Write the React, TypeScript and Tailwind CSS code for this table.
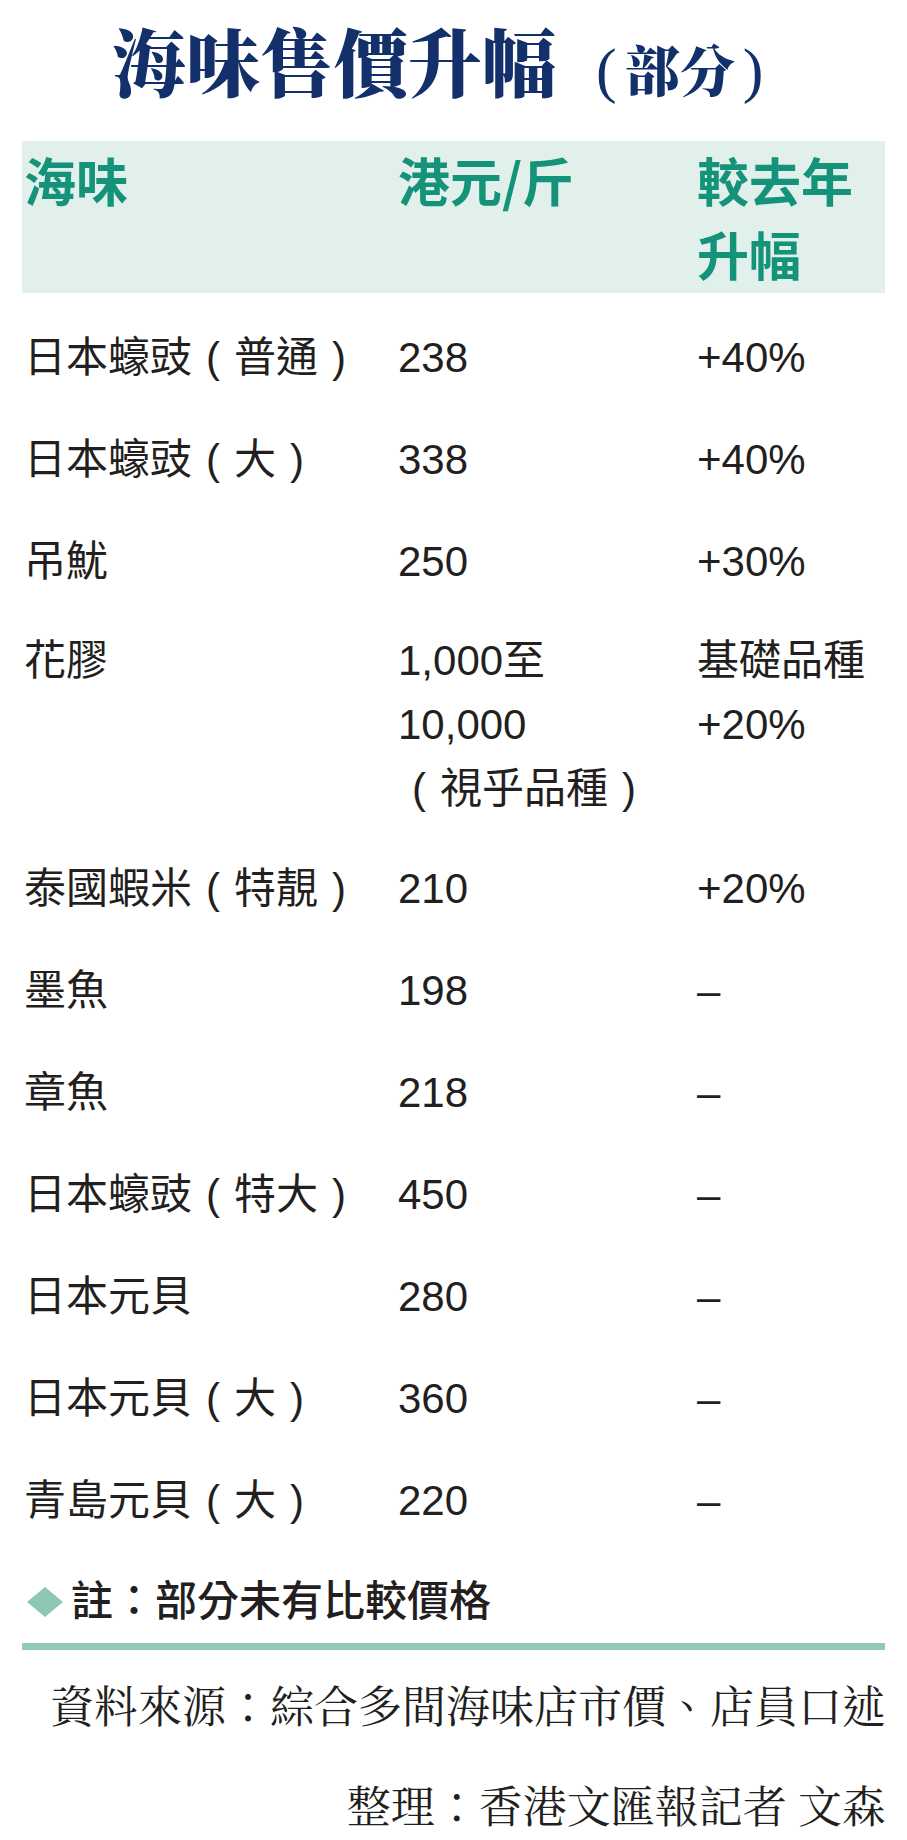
import React from 'react';

type Row = { name: string; price: string[]; change: string[] };

const rows: Row[] = [
  { name: '日本蠔豉（普通）', price: ['238'], change: ['+40%'] },
  { name: '日本蠔豉（大）', price: ['338'], change: ['+40%'] },
  { name: '吊魷', price: ['250'], change: ['+30%'] },
  { name: '花膠', price: ['1,000至', '10,000', '（視乎品種）'], change: ['基礎品種', '+20%'] },
  { name: '泰國蝦米（特靚）', price: ['210'], change: ['+20%'] },
  { name: '墨魚', price: ['198'], change: ['–'] },
  { name: '章魚', price: ['218'], change: ['–'] },
  { name: '日本蠔豉（特大）', price: ['450'], change: ['–'] },
  { name: '日本元貝', price: ['280'], change: ['–'] },
  { name: '日本元貝（大）', price: ['360'], change: ['–'] },
  { name: '青島元貝（大）', price: ['220'], change: ['–'] },
];

const sans = "font-['Liberation_Sans','Noto_Sans_CJK_TC',sans-serif]";
const serif = "font-['Noto_Serif_CJK_TC','Noto_Sans_CJK_TC',serif]";

// full-width brackets drawn centred in their cell, as in the print layout
const Cell = ({ text }: { text: string }) => (
  <>
    {text.split(/([（）])/).map((part, i) =>
      part === '（' || part === '）' ? (
        <span key={i} className="inline-block w-[1em] text-center font-light">
          {part === '（' ? '(' : ')'}
        </span>
      ) : (
        <span key={i}>{part}</span>
      )
    )}
  </>
);

const App = () => {
  return (
    <div className={`w-[907px] h-[1840px] bg-white text-[#231f20] ${sans}`}>
      {/* Title */}
      <div className={`h-[141px] pt-[22px] pl-[112px] flex items-baseline text-[#13306b] font-black ${serif}`}>
        <span className="text-[74px] leading-none">海味售價升幅</span>
        <span className="ml-[40px] text-[62px] leading-none font-['Liberation_Serif',serif] font-normal">(</span>
        <span className="ml-[8px] text-[55px] leading-none">部分</span>
        <span className="ml-[8px] text-[62px] leading-none font-['Liberation_Serif',serif] font-normal">)</span>
      </div>

      {/* Header band */}
      <div className="mx-[22px] bg-[#e2f0ec] px-[2px] py-[2px] grid grid-cols-[374px_299px_1fr] text-[52px] leading-[74px] font-bold text-[#15937a] font-['Noto_Sans_CJK_TC',sans-serif]">
        <div>海味</div>
        <div>港元/斤</div>
        <div>
          <div>較去年</div>
          <div>升幅</div>
        </div>
      </div>

      {/* Rows */}
      <div className="mt-[14px] pl-[24px] text-[42px] leading-[64px]">
        {rows.map((r) => (
          <div
            key={r.name}
            className={`grid grid-cols-[374px_299px_1fr] ${r.price.length > 1 ? 'pt-[16px] pb-[17px]' : 'py-[19px]'}`}
          >
            <div>
              <Cell text={r.name} />
            </div>
            <div>
              {r.price.map((p) => (
                <div key={p}>
                  <Cell text={p} />
                </div>
              ))}
            </div>
            <div>
              {r.change.map((c) => (
                <div key={c}>{c}</div>
              ))}
            </div>
          </div>
        ))}
      </div>

      {/* Note */}
      <div className="mt-[18px] pl-[27px] flex items-center gap-[8px] text-[42px] leading-[64px] font-medium">
        <span className="w-[36px] h-[30px] bg-[#8fc8b2] [clip-path:polygon(50%_0,100%_50%,50%_100%,0_50%)]" />
        <span>註：部分未有比較價格</span>
      </div>

      {/* Rule */}
      <div className="mx-[22px] mt-[9px] h-[7px] bg-[#92cab5]" />

      {/* Source */}
      <div className={`pr-[21px] text-right text-[44px] leading-[100px] ${serif}`}>
        <div className="mt-[4px]">資料來源：綜合多間海味店市價、店員口述</div>
        <div>整理：香港文匯報記者 文森</div>
      </div>
    </div>
  );
};

export default App;
